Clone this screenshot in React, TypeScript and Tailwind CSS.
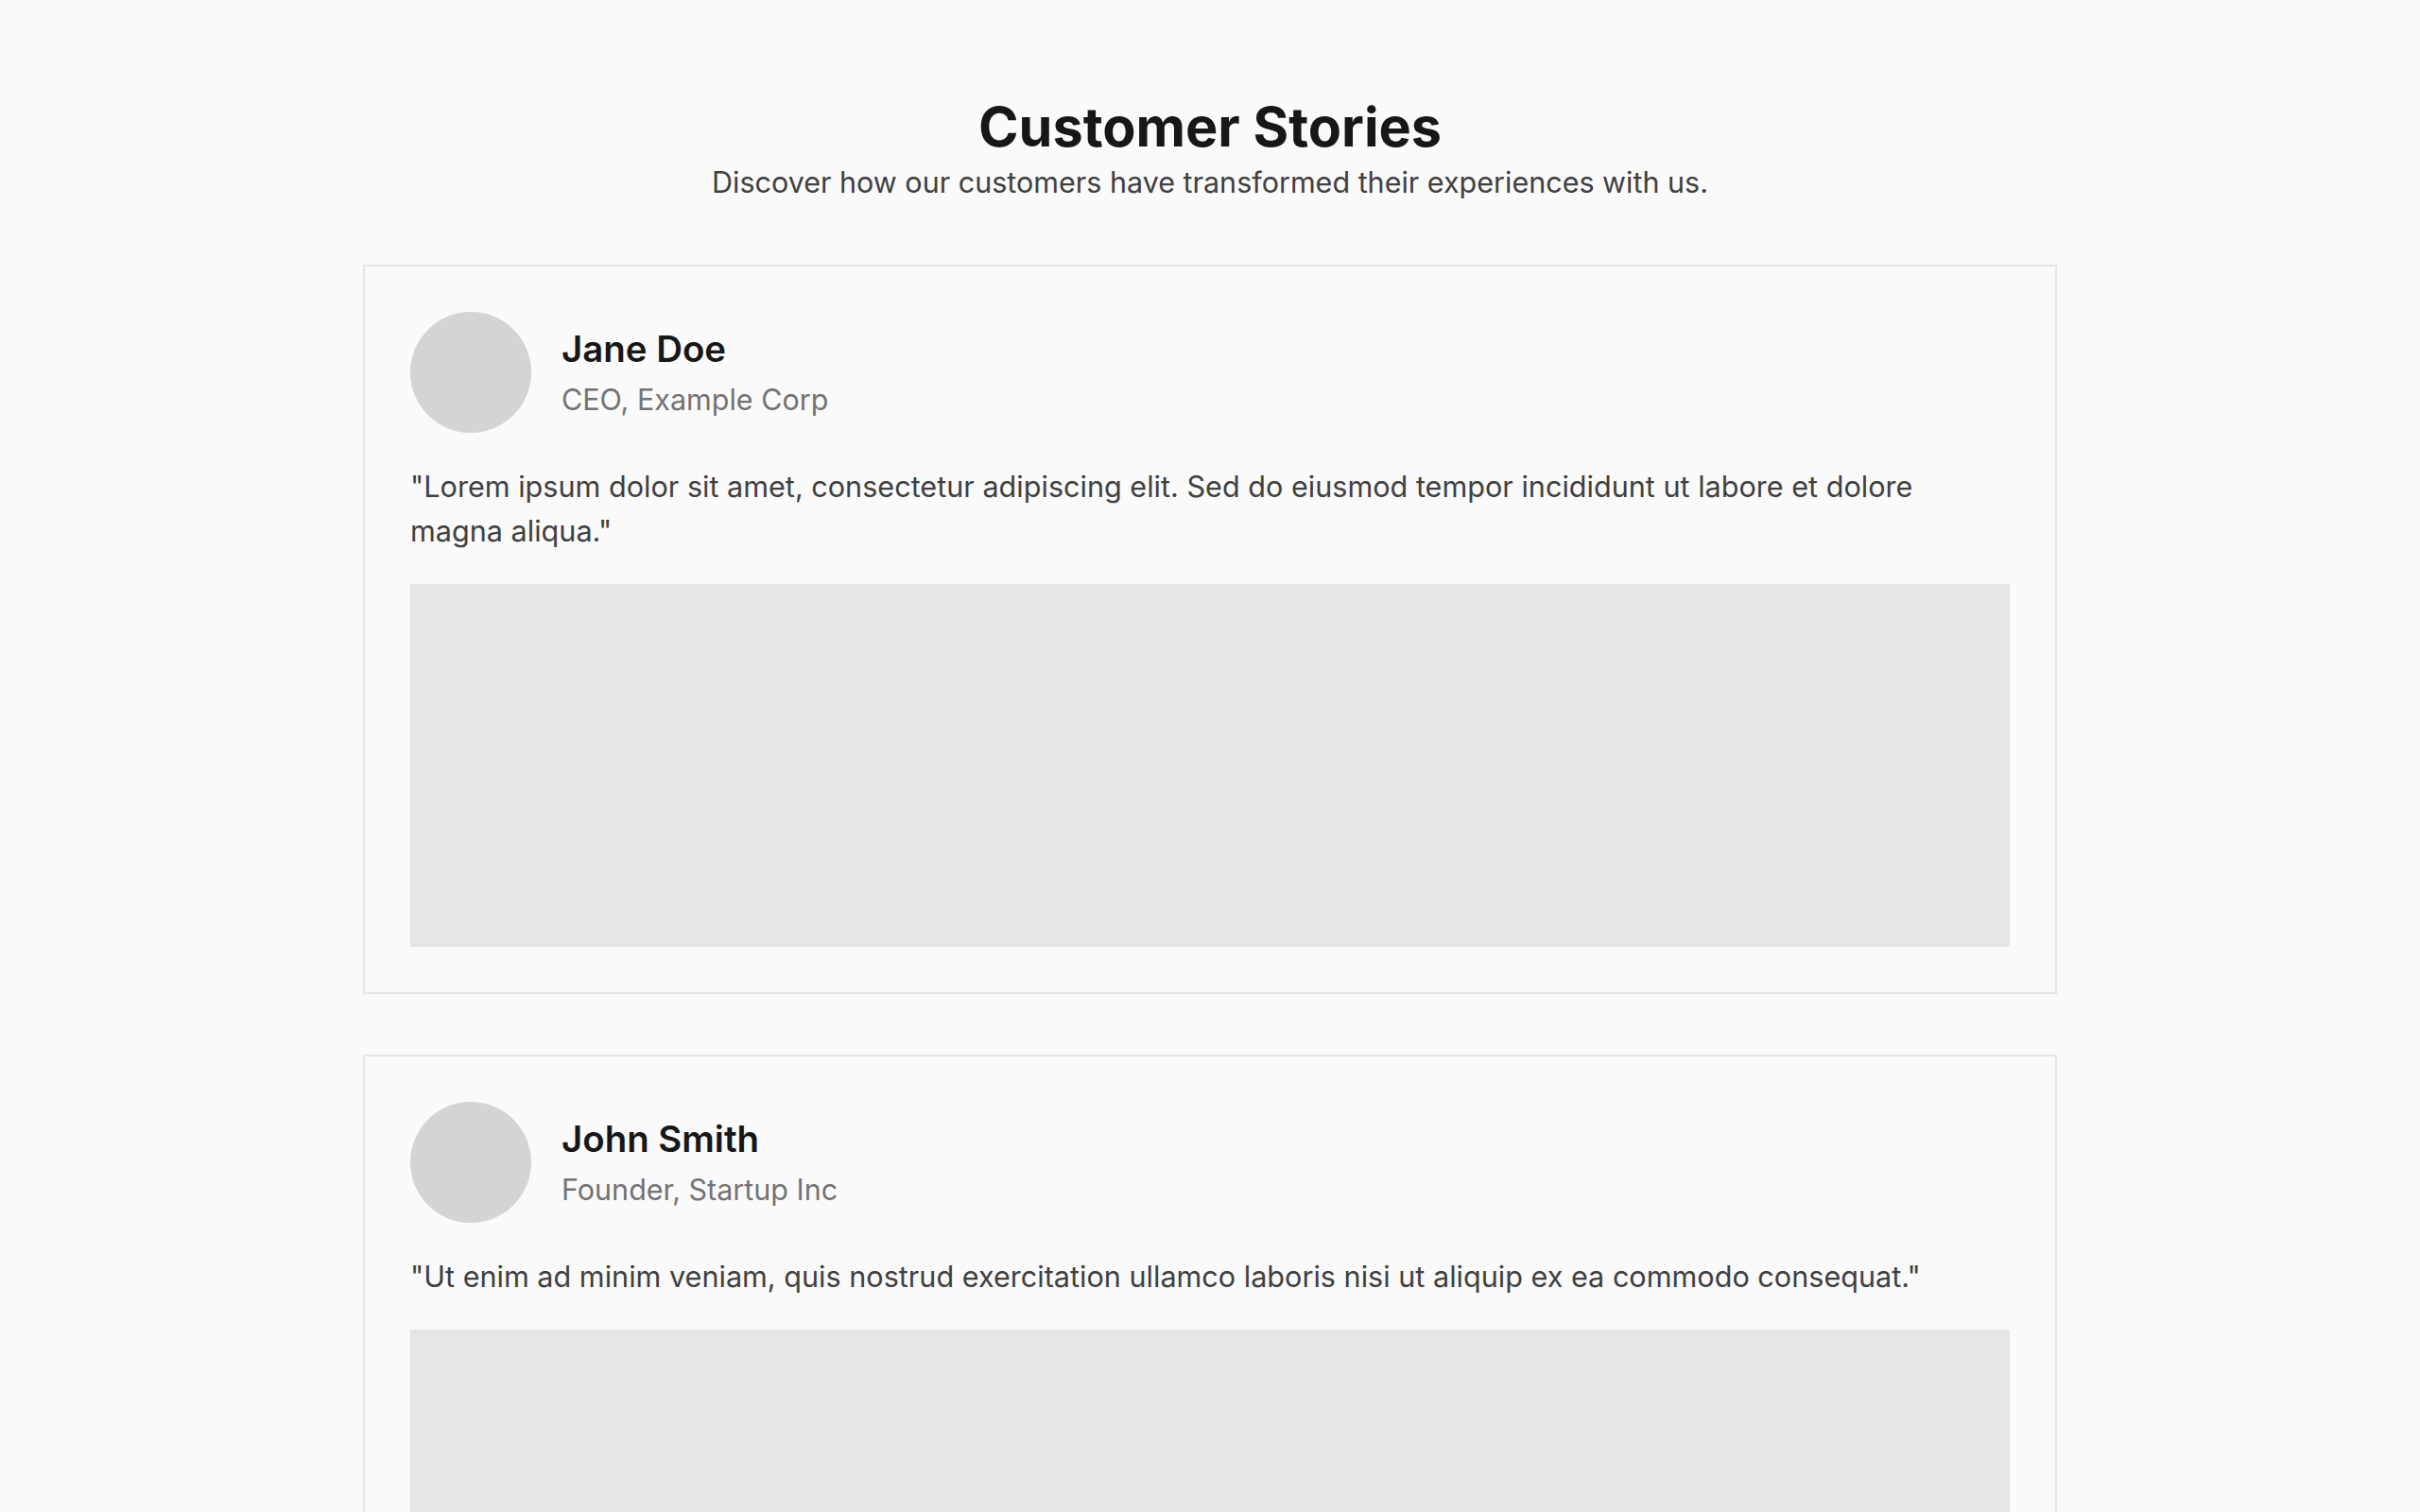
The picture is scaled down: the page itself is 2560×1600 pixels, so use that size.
import React from "react";

const stories = [
  {
    name: "Jane Doe",
    role: "CEO, Example Corp",
    quote:
      '"Lorem ipsum dolor sit amet, consectetur adipiscing elit. Sed do eiusmod tempor incididunt ut labore et dolore magna aliqua."',
  },
  {
    name: "John Smith",
    role: "Founder, Startup Inc",
    quote:
      '"Ut enim ad minim veniam, quis nostrud exercitation ullamco laboris nisi ut aliquip ex ea commodo consequat."',
  },
];

export default function App() {
  return (
    <div
      className="min-h-screen bg-[#fafafa] pt-[102px] pb-[102px]"
      style={{ fontFamily: "Inter, 'Noto Sans', sans-serif" }}
    >
      <header className="text-center mb-[64px]">
        <h1 className="text-[57.6px] leading-[64px] font-bold text-[#171717]">Customer Stories</h1>
        <p className="mt-[4px] text-[30.5px] leading-[46px] text-[#404040]">
          Discover how our customers have transformed their experiences with us.
        </p>
      </header>
      <div className="mx-auto w-[1792px] flex flex-col gap-[64px]">
        {stories.map((s) => (
          <article key={s.name} className="border-2 border-[#e5e5e5] bg-[#fafafa] p-[48px]">
            <div className="flex items-center gap-[32px] mb-[33px]">
              <div className="w-[128px] h-[128px] rounded-full bg-[#d4d4d4] shrink-0" />
              <div className="pt-[2px]">
                <h2 className="text-[38.4px] leading-[51.2px] font-semibold text-[#171717]">{s.name}</h2>
                <p className="mt-[4px] text-[30.5px] leading-[46px] text-[#737373]">{s.role}</p>
              </div>
            </div>
            <p className="text-[30.6px] leading-[47px] text-[#404040] mb-[33px] pr-[16px]">{s.quote}</p>
            <div className="h-[384px] bg-[#e5e5e5]" />
          </article>
        ))}
      </div>
    </div>
  );
}
